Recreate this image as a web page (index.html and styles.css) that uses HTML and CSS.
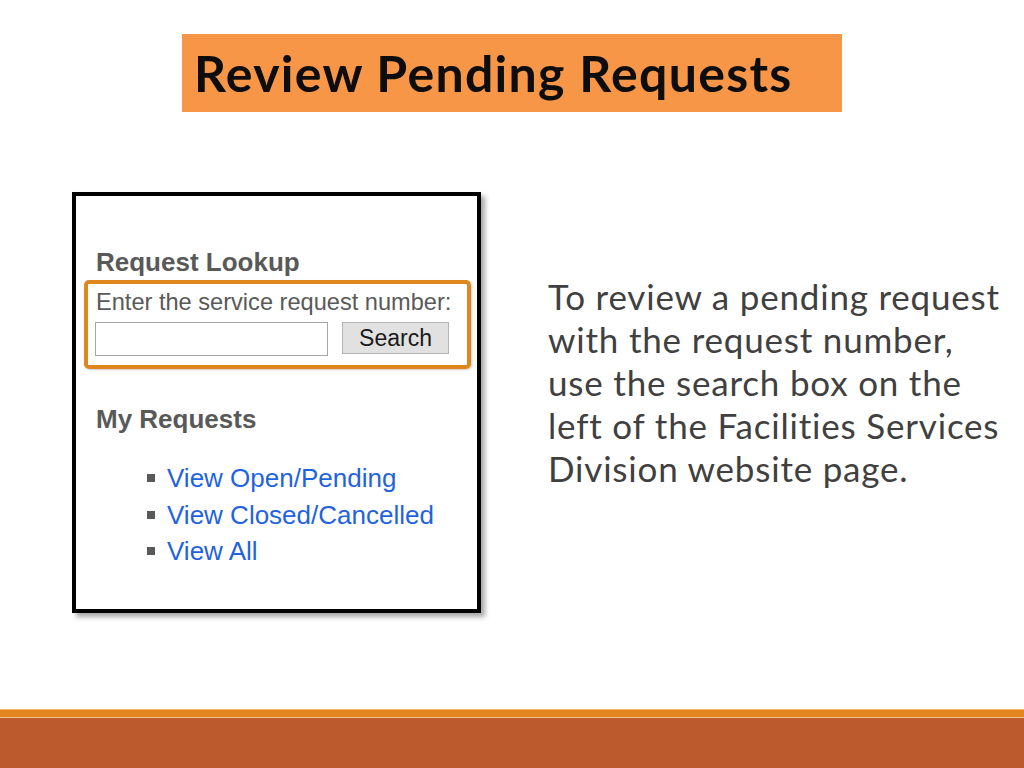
FILE: index.html
```html
<!DOCTYPE html>
<html>
<head>
<meta charset="utf-8">
<title>Review Pending Requests</title>
<link rel="stylesheet" href="styles.css">
</head>
<body>
<div class="slide">
  <header class="title-wrap">
    <h1 class="title">Review Pending Requests</h1>
  </header>
  <main class="content">
    <section class="panel">
      <h3 class="panel-heading heading-lookup">Request Lookup</h3>
      <div class="lookup-box">
        <div class="lookup-label">Enter the service request number:</div>
        <div class="lookup-row">
          <input class="lookup-input" type="text">
          <button class="lookup-button">Search</button>
        </div>
      </div>
      <h3 class="panel-heading heading-my">My Requests</h3>
      <ul class="req-list">
        <li><a href="#">View Open/Pending</a></li>
        <li><a href="#">View Closed/Cancelled</a></li>
        <li><a href="#">View All</a></li>
      </ul>
    </section>
    <p class="desc">To review a pending request with the request number, use the search box on the left of the Facilities Services Division website page.</p>
  </main>
  <footer class="footer">
    <div class="footer-stripe"></div>
    <div class="footer-line"></div>
    <div class="footer-band"></div>
  </footer>
</div>
</body>
</html>
```
FILE: styles.css
```css
html, body {
  margin: 0;
  padding: 0;
  background: #ffffff;
}
.slide {
  width: 1024px;
  height: 768px;
  display: flex;
  flex-direction: column;
  overflow: hidden;
  background: #ffffff;
}
.title-wrap {
  padding: 34px 0 0 182px;
}
.title {
  margin: 0;
  width: 648px;
  height: 78px;
  padding-left: 12px;
  background: #f79646;
  font-family: Lato, "Open Sans", sans-serif;
  font-weight: 700;
  font-size: 50px;
  line-height: 78px;
  color: #0d0d0d;
  letter-spacing: 1.3px;
  font-variant-ligatures: none;
}
.content {
  display: flex;
  align-items: flex-start;
  margin-top: 80px;
}
.panel {
  box-sizing: border-box;
  margin-left: 72px;
  width: 409px;
  height: 421px;
  border: 4px solid #000;
  background: #fff;
  box-shadow: 4px 4px 5px rgba(0, 0, 0, 0.35);
  font-family: "Liberation Sans", Arial, sans-serif;
}
.panel-heading {
  margin: 0;
  padding-left: 20px;
  font-size: 26px;
  line-height: 30px;
  font-weight: 700;
  color: #595959;
}
.heading-lookup {
  margin-top: 51px;
}
.lookup-box {
  margin: 3px 6px 0 8px;
  border: 4px solid #e0861f;
  border-radius: 5px;
  padding: 4px 7px 9px 7px;
  box-shadow: 1px 1px 2px rgba(0,0,0,0.2);
}
.lookup-label {
  font-size: 23.6px;
  line-height: 28px;
  color: #595959;
  padding-left: 1px;
}
.lookup-row {
  display: flex;
  align-items: flex-start;
  gap: 14px;
  margin-top: 6px;
}
.lookup-input {
  box-sizing: border-box;
  width: 233px;
  height: 34px;
  margin: 0;
  border: 1px solid #a6a6a6;
  background: #fff;
  padding: 0;
}
.lookup-button {
  box-sizing: border-box;
  width: 107px;
  height: 32px;
  margin: 0;
  border: 1px solid #b3b3b3;
  background: #e1e1e1;
  font-family: "Liberation Sans", Arial, sans-serif;
  font-size: 23px;
  line-height: 30px;
  color: #1a1a1a;
  padding: 0;
}
.heading-my {
  margin-top: 35px;
}
.req-list {
  list-style: none;
  margin: 26px 0 0 0;
  padding-left: 71px;
}
.req-list li {
  font-size: 26px;
  line-height: 36.5px;
}
.req-list li::before {
  content: "";
  display: inline-block;
  width: 8px;
  height: 8px;
  background: #595959;
  margin-right: 12px;
  vertical-align: 5px;
}
.req-list a {
  color: #1f63e0;
  text-decoration: none;
}
.desc {
  margin: 83px 0 0 67px;
  width: 462px;
  font-family: Lato, "Open Sans", sans-serif;
  font-size: 35px;
  line-height: 43px;
  letter-spacing: 0.8px;
  color: #404040;
  font-variant-ligatures: none;
}
.footer {
  margin-top: auto;
}
.footer-stripe {
  height: 7px;
  background: #e3861f;
  border-top: 1px solid #f2b36a;
}
.footer-line {
  height: 1px;
  background: #f4c48f;
}
.footer-band {
  height: 50px;
  background: #bc5a2d;
}
```
